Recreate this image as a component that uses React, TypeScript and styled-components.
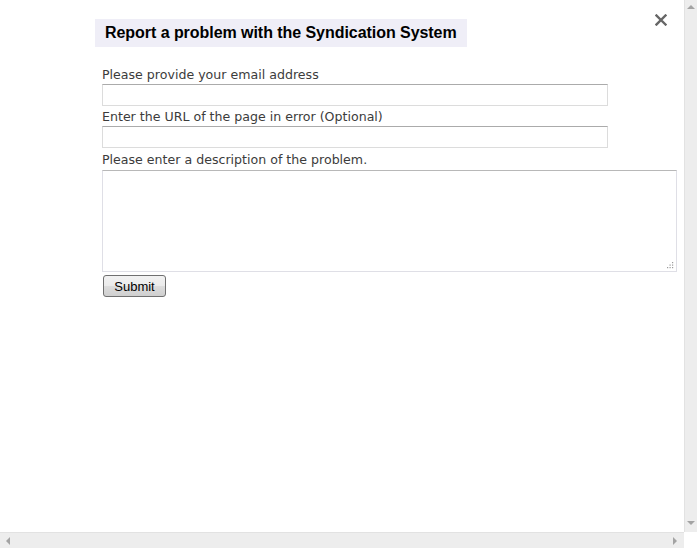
import styled, { createGlobalStyle } from "styled-components";

const GlobalStyle = createGlobalStyle`
    html, body {
        margin: 0;
        padding: 0;
        background: #ffffff;
    }
`;

const StyledFrame = styled.div`
    width: 697px;
    height: 548px;
    display: grid;
    grid-template-columns: 1fr 13px;
    grid-template-rows: 1fr 16px;
    overflow: hidden;
    background: #ffffff;
`;

const StyledViewport = styled.div`
    padding: 19px 0 0 95px;
    display: flex;
    flex-flow: column nowrap;
    align-items: flex-start;
`;

const StyledTitle = styled.h1`
    margin: 0;
    background-color: #efeef7;
    padding: 0 10px;
    height: 28px;
    line-height: 28px;
    font-family: "Liberation Sans", Arial, sans-serif;
    font-size: 16px;
    letter-spacing: -0.05px;
    font-weight: 700;
    color: #000000;
`;

const StyledForm = styled.form`
    margin: 19px 0 0 7px;
    display: flex;
    flex-flow: column nowrap;
    align-items: flex-start;
`;

const StyledLabel = styled.label<{ $top: number }>`
    display: block;
    margin-top: ${(p) => p.$top}px;
    height: 18px;
    line-height: 18px;
    font-family: "DejaVu Sans", Verdana, sans-serif;
    font-size: 12.6px;
    color: #3c3c3c;
`;

const StyledInput = styled.input`
    box-sizing: border-box;
    width: 506px;
    height: 22px;
    margin: 0;
    border: 1px solid #dcdcdc;
    border-top-color: #ababab;
    background: #ffffff;
    padding: 0 3px;
`;

const StyledAreaWrap = styled.div`
    position: relative;
    margin-top: 1px;
    width: 575px;
    height: 102px;
`;

const StyledTextArea = styled.textarea`
    box-sizing: border-box;
    display: block;
    width: 100%;
    height: 100%;
    margin: 0;
    border: 1px solid #dfdfe6;
    border-top-color: #b8b8b8;
    background: #ffffff;
    resize: none;
`;

const StyledGrip = styled.svg`
    position: absolute;
    right: 3px;
    bottom: 3px;
`;

const StyledSubmit = styled.button`
    box-sizing: border-box;
    margin: 3px 0 0 1px;
    width: 63px;
    height: 22px;
    padding: 0;
    border: 1px solid #707070;
    border-radius: 3px;
    background: linear-gradient(#f2f2f2 0%, #ebebeb 50%, #dddddd 51%, #cfcfcf 100%);
    font-family: "Liberation Sans", Arial, sans-serif;
    font-size: 13px;
    color: #000000;
`;

const StyledClose = styled.button`
    position: absolute;
    top: 10px;
    left: 651px;
    width: 20px;
    height: 20px;
    padding: 0;
    border: 0;
    background: transparent;
    display: flex;
    align-items: center;
    justify-content: center;
`;

const StyledVBar = styled.div`
    background: #ededed;
    border-left: 1px solid #e2e2e2;
    display: flex;
    flex-flow: column nowrap;
    justify-content: space-between;
    align-items: center;
    padding: 4px 0 6px;
`;

const StyledHBar = styled.div`
    background: #ededed;
    border-top: 1px solid #e2e2e2;
    display: flex;
    flex-flow: row nowrap;
    justify-content: space-between;
    align-items: center;
    padding: 0 6px 0 5px;
`;

const StyledCorner = styled.div`
    background: #ffffff;
`;

function Arrow({ dir }: { dir: "up" | "down" | "left" | "right" }) {
    const pts = {
        up: "0,5 4,1 8,5",
        down: "0,1 8,1 4,5",
        left: "5,0 1,4 5,8",
        right: "1,0 5,4 1,8",
    }[dir];
    const vertical = dir === "up" || dir === "down";
    return (
        <svg width={vertical ? 8 : 6} height={vertical ? 6 : 8} viewBox={vertical ? "0 0 8 6" : "0 0 6 8"}>
            <polygon points={pts} fill="#a3a3a3" />
        </svg>
    );
}

export default function App() {
    return (
        <>
            <GlobalStyle />
            <StyledFrame>
                <StyledViewport>
                    <StyledTitle>Report a problem with the Syndication System</StyledTitle>
                    <StyledForm onSubmit={(e) => e.preventDefault()}>
                        <StyledLabel $top={0} htmlFor="email">Please provide your email address</StyledLabel>
                        <StyledInput id="email" type="text" />
                        <StyledLabel $top={2} htmlFor="url">Enter the URL of the page in error (Optional)</StyledLabel>
                        <StyledInput id="url" type="text" />
                        <StyledLabel $top={3} htmlFor="desc">Please enter a description of the problem.</StyledLabel>
                        <StyledAreaWrap>
                            <StyledTextArea id="desc" />
                            <StyledGrip width="7" height="7" viewBox="0 0 7 7">
                                <rect x="5" y="0" width="1.2" height="1.2" fill="#9a9a9a" />
                                <rect x="2.5" y="2.5" width="1.2" height="1.2" fill="#9a9a9a" />
                                <rect x="5" y="2.5" width="1.2" height="1.2" fill="#9a9a9a" />
                                <rect x="0" y="5" width="1.2" height="1.2" fill="#9a9a9a" />
                                <rect x="2.5" y="5" width="1.2" height="1.2" fill="#9a9a9a" />
                                <rect x="5" y="5" width="1.2" height="1.2" fill="#9a9a9a" />
                            </StyledGrip>
                        </StyledAreaWrap>
                        <StyledSubmit type="submit">Submit</StyledSubmit>
                    </StyledForm>
                </StyledViewport>
                <StyledVBar>
                    <Arrow dir="up" />
                    <Arrow dir="down" />
                </StyledVBar>
                <StyledHBar>
                    <Arrow dir="left" />
                    <Arrow dir="right" />
                </StyledHBar>
                <StyledCorner />
            </StyledFrame>
            <StyledClose aria-label="Close">
                <svg width="12" height="12" viewBox="0 0 12 12">
                    <path d="M1.5 1.5 L10.5 10.5 M10.5 1.5 L1.5 10.5" stroke="#666666" strokeWidth="2.4" strokeLinecap="square" />
                </svg>
            </StyledClose>
        </>
    );
}
